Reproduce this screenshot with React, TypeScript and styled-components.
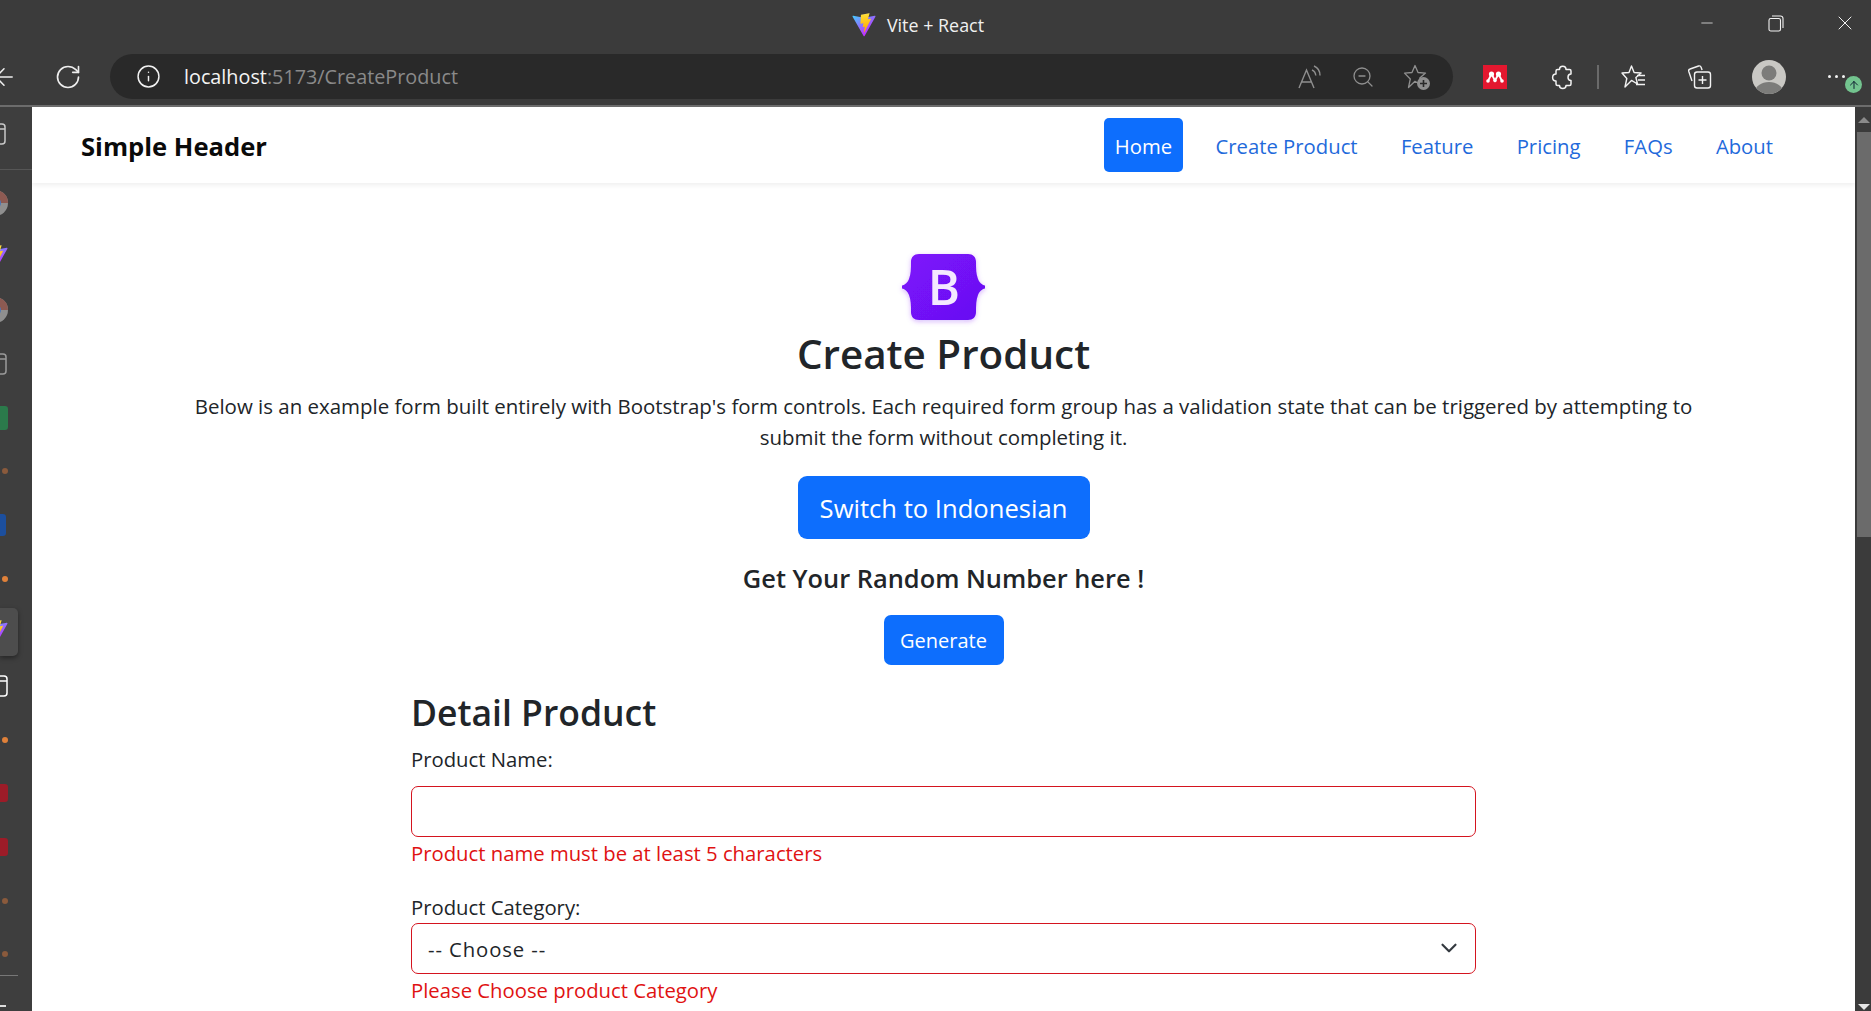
import styled, { createGlobalStyle } from 'styled-components';
import {
	ChevronDown,
	Info,
	RotateCw,
	ZoomOut,
	Minus,
	X,
	ArrowUp,
	ArrowLeft,
} from 'lucide-react';

const GlobalStyle = createGlobalStyle`
	html, body {
		margin: 0;
		padding: 0;
		background: #fff;
	}
	body {
		font-family: "Open Sans", "Noto Sans", sans-serif;
		color: #212529;
		overflow: hidden;
	}
	* {
		box-sizing: border-box;
	}
`;

const Screen = styled.div`
	width: 1871px;
	height: 1011px;
	display: flex;
	flex-direction: column;
	overflow: hidden;
	background: #3b3b3b;
`;

const TitleBar = styled.div`
	height: 46px;
	flex: none;
	display: flex;
	align-items: center;
	justify-content: center;
	gap: 11px;
	position: relative;
	color: #f0f0f0;
	font-size: 17.9px;
	padding: 4px 35px 0 0;
`;

const WindowControls = styled.div`
	position: absolute;
	right: -8px;
	top: 0;
	height: 46px;
	display: flex;
	align-items: center;
`;

const WindowButton = styled.div`
	width: 69px;
	display: flex;
	justify-content: center;
	color: #f2f2f2;
`;

const Toolbar = styled.div`
	height: 61px;
	flex: none;
	display: flex;
	align-items: flex-start;
	padding-top: 8px;
	border-bottom: 2px solid #6c6c6c;
	color: #f2f2f2;
`;

const BackSlot = styled.div`
	width: 110px;
	height: 45px;
	flex: none;
	display: flex;
	align-items: center;
	color: #eee;
`;

const BackIcon = styled.div`
	margin-left: -10px;
	display: flex;
`;

const ReloadIcon = styled.div`
	margin-left: 36px;
	display: flex;
`;

const AddressPill = styled.div`
	width: 1343px;
	height: 45px;
	flex: none;
	display: flex;
	align-items: center;
	background: #292929;
	border-radius: 23px;
	padding-left: 26px;
`;

const Url = styled.div`
	margin-left: 23px;
	font-size: 19.8px;
	color: #8a8a8a;
	flex: 1;
	span {
		color: #f4f4f4;
	}
`;

const PillIcons = styled.div`
	display: flex;
	align-items: center;
	gap: 28px;
	padding-right: 22px;
	color: #8f8f8f;
`;

const ToolIcons = styled.div`
	flex: 1;
	height: 45px;
	display: flex;
	align-items: center;
	position: relative;
`;

const ToolSlot = styled.div<{ $w: number }>`
	width: ${(p) => p.$w}px;
	flex: none;
	display: flex;
	justify-content: center;
	align-items: center;
`;

const Divider = styled.div`
	width: 2px;
	height: 24px;
	background: #6a6a6a;
`;

const Avatar = styled.div`
	width: 34px;
	height: 34px;
	border-radius: 50%;
	background: #c9c8c4;
	overflow: hidden;
	flex: none;
`;

const MenuDots = styled.div`
	display: flex;
	gap: 4px;
`;

const MenuDot = styled.i`
	width: 3px;
	height: 3px;
	border-radius: 50%;
	background: #f2f2f2;
`;

const UpdateBadge = styled.div`
	position: absolute;
	right: 13px;
	top: 22px;
	width: 17px;
	height: 17px;
	border-radius: 50%;
	background: #73c48f;
	color: #123;
	display: flex;
	align-items: center;
	justify-content: center;
`;

const Body = styled.div`
	flex: 1;
	min-height: 0;
	display: flex;
`;

const Sidebar = styled.div`
	width: 32px;
	flex: none;
	overflow: hidden;
	display: flex;
	flex-direction: column;
	background: #3e3e3e;
`;

const TopTab = styled.div`
	height: 63px;
	flex: none;
	display: flex;
	align-items: center;
	border-bottom: 1px solid #565656;
	padding-bottom: 8px;
	margin-bottom: 6px;
	color: #ddd;
`;

const Slot = styled.div`
	height: 53.7px;
	flex: none;
	display: flex;
	align-items: center;
`;

const ActiveTile = styled.div`
	width: 18px;
	height: 48px;
	background: #4d4d4d;
	border-radius: 0 5px 5px 0;
	box-shadow: 0 2px 5px rgba(0, 0, 0, 0.4);
	display: flex;
	align-items: center;
	overflow: hidden;
`;

const CroppedIcon = styled.div<{ $shift: number }>`
	margin-left: ${(p) => p.$shift}px;
	display: flex;
	flex: none;
`;

const Dot = styled.i<{ $dim?: boolean }>`
	width: 6px;
	height: 6px;
	margin-left: 2px;
	border-radius: 50%;
	background: ${(p) => (p.$dim ? '#8a5a3c' : '#e0813a')};
`;

const Tile = styled.i<{ $color: string; $w: number; $h: number }>`
	width: ${(p) => p.$w}px;
	height: ${(p) => p.$h}px;
	background: ${(p) => p.$color};
	border-radius: 0 3px 3px 0;
`;

const SideRule = styled.div`
	width: 18px;
	height: 1px;
	background: #777;
	margin-top: -6px;
`;

const SideDash = styled.div`
	width: 6px;
	height: 2px;
	background: #ddd;
	margin-top: 29px;
`;

const Page = styled.div`
	flex: 1;
	min-width: 0;
	background: #fff;
	overflow: hidden;
`;

const Navbar = styled.nav`
	height: 76px;
	display: flex;
	align-items: center;
	justify-content: space-between;
	padding: 0 71px 0 49px;
	box-shadow: 0 2px 5px rgba(0, 0, 0, 0.07);
`;

const Brand = styled.div`
	font-size: 25.6px;
	font-weight: 700;
	color: #0a0a0a;
	padding-top: 2px;
`;

const NavLinks = styled.div`
	display: flex;
	gap: 21.3px;
`;

const NavLink = styled.a<{ $active?: boolean }>`
	height: 54px;
	padding: 2px 11px 0;
	display: flex;
	align-items: center;
	font-size: 20.3px;
	border-radius: 5px;
	color: ${(p) => (p.$active ? '#fff' : '#1f6adb')};
	background: ${(p) => (p.$active ? '#0d6efd' : 'transparent')};
`;

const Hero = styled.div`
	display: flex;
	flex-direction: column;
	align-items: center;
	text-align: center;
	padding-top: 71px;
`;

const LogoMark = styled.svg`
	width: 83px;
	height: 66px;
	display: block;
	overflow: visible;
`;

const Title = styled.h1`
	margin: 11px 0 0;
	font-size: 40.4px;
	line-height: 46px;
	font-weight: 600;
`;

const Lead = styled.p`
	margin: 14px 0 0;
	width: 1540px;
	font-size: 20.47px;
	line-height: 31px;
`;

const PrimaryButton = styled.button<{ $large?: boolean }>`
	border: 0;
	font-family: inherit;
	color: #fff;
	background: #0d6efd;
	padding: 1px 0 0;
	width: ${(p) => (p.$large ? 292 : 120)}px;
	height: ${(p) => (p.$large ? 63 : 50)}px;
	border-radius: ${(p) => (p.$large ? 9 : 7)}px;
	font-size: ${(p) => (p.$large ? 25.6 : 20)}px;
`;

const LangButton = styled(PrimaryButton)`
	margin-top: 23px;
`;

const RandomLabel = styled.h3`
	margin: 22px 0 20px;
	font-size: 25.4px;
	line-height: 34px;
	font-weight: 600;
`;

const FormBlock = styled.form`
	width: 1065px;
	margin: 22px auto 0;
`;

const FormTitle = styled.h2`
	margin: 0;
	font-size: 35.5px;
	line-height: 50px;
	font-weight: 600;
`;

const Label = styled.label`
	display: block;
	font-size: 20.3px;
	line-height: 28px;
`;

const NameLabel = styled(Label)`
	margin: 8px 0 13px;
`;

const CategoryLabel = styled(Label)`
	margin: 26px 0 2px;
`;

const FieldInput = styled.input`
	display: block;
	width: 100%;
	height: 51px;
	border: 1.2px solid #d4141f;
	border-radius: 7px;
	background: #fff;
	outline: none;
`;

const SelectWrap = styled.div`
	position: relative;
	margin-bottom: 1px;
`;

const FieldSelect = styled.select`
	display: block;
	width: 100%;
	height: 51px;
	padding: 0 16px;
	appearance: none;
	border: 1.2px solid #d4141f;
	border-radius: 7px;
	background: #fff;
	font-family: inherit;
	font-size: 20.3px;
	letter-spacing: 0.9px;
	color: #212529;
	outline: none;
`;

const SelectChevron = styled.div`
	position: absolute;
	right: 14px;
	top: 12px;
	display: flex;
	color: #343a40;
`;

const FieldError = styled.div`
	color: #e01212;
	font-size: 20.3px;
	line-height: 28px;
	margin-top: 2px;
`;

const ScrollTrack = styled.div`
	width: 16px;
	flex: none;
	background: #3b3b3b;
	display: flex;
	flex-direction: column;
	align-items: flex-end;
`;

const ScrollArrow = styled.div<{ $down?: boolean }>`
	width: 0;
	height: 0;
	margin: ${(p) => (p.$down ? 'auto 1px 1px 0' : '10px 1px 0 0')};
	border-left: 6px solid transparent;
	border-right: 6px solid transparent;
	${(p) =>
		p.$down
			? 'border-top: 6px solid #e6e6e6;'
			: 'border-bottom: 6px solid #8a8a8a;'}
`;

const ScrollThumb = styled.div`
	width: 14px;
	height: 405px;
	margin-top: 9px;
	background: #6b6b6b;
`;

const ViteLogo = ({ size = 24 }: { size?: number }) => (
	<svg width={size} height={size} viewBox="0 0 410 404">
		<defs>
			<linearGradient id="viteA" x1="6" y1="33" x2="235" y2="344" gradientUnits="userSpaceOnUse">
				<stop stopColor="#41D1FF" />
				<stop offset="1" stopColor="#BD34FE" />
			</linearGradient>
			<linearGradient id="viteB" x1="194" y1="8" x2="236" y2="292" gradientUnits="userSpaceOnUse">
				<stop stopColor="#FFEA83" />
				<stop offset="0.08" stopColor="#FFDD35" />
				<stop offset="1" stopColor="#FFA800" />
			</linearGradient>
		</defs>
		<path
			d="M399.641 59.525L215.643 388.545C211.844 395.338 202.084 395.378 198.228 388.618L10.582 59.556C6.38 52.19 12.68 43.266 21.028 44.76L205.223 77.682C206.398 77.892 207.601 77.89 208.776 77.676L389.119 44.806C397.439 43.289 403.768 52.143 399.641 59.525Z"
			fill="url(#viteA)"
		/>
		<path
			d="M292.965 1.574L156.801 28.255C154.563 28.694 152.906 30.59 152.771 32.866L144.395 174.33C144.198 177.662 147.258 180.248 150.51 179.498L188.42 170.749C191.967 169.931 195.172 173.055 194.443 176.622L183.18 231.775C182.422 235.487 185.907 238.661 189.532 237.56L212.947 230.446C216.577 229.344 220.065 232.527 219.297 236.242L201.398 322.875C200.278 328.294 207.486 331.249 210.492 326.603L212.5 323.5L323.454 102.072C325.312 98.365 322.108 94.137 318.036 94.923L279.014 102.454C275.347 103.161 272.227 99.746 273.262 96.158L298.731 7.867C299.767 4.273 296.636 0.855 292.965 1.574Z"
			fill="url(#viteB)"
		/>
	</svg>
);

const RestoreIcon = () => (
	<svg width="16" height="17" viewBox="0 0 16 17" fill="none" stroke="currentColor" strokeWidth="1.1">
		<rect x="1" y="3.5" width="11.5" height="12.5" rx="1.8" />
		<path d="M4 1h8.5A2.5 2.5 0 0 1 15 3.5V13" />
	</svg>
);

const ReadAloudIcon = () => (
	<svg width="26" height="26" viewBox="0 0 26 26" fill="none" stroke="currentColor" strokeWidth="1.4">
		<path d="M2 24L9.5 6 17 24M4.800 18h9.500" />
		<path d="M15 6c2 .8 3.500 2.800 3.800 5.500M17 2c3.500 1.500 6 5 6 9.500" />
	</svg>
);

const StarAddIcon = () => (
	<svg width="28" height="28" viewBox="0 0 28 28" fill="none">
		<path
			d="M12 2.500l3 7 7.500.6-5.700 4.900 1.800 7.300L12 18.300 5.500 24.500l1.800-8.500L1.500 10.100 9 9.500z"
			stroke="currentColor"
			strokeWidth="1.3"
			strokeLinejoin="round"
		/>
		<circle cx="20.500" cy="20.500" r="6.500" fill="#8f8f8f" />
		<path d="M20.500 17v7M17 20.500h7" stroke="#292929" strokeWidth="1.600" />
	</svg>
);

const PuzzleIcon = () => (
	<svg width="26" height="26" viewBox="0 0 26 26" fill="none" stroke="currentColor" strokeWidth="1.5" strokeLinejoin="round">
		<path d="M8.500 5.500H10.500C10.500 1 17 1 17 5.500H20.500C21.500 5.500 22 6 22 7V10C18 10 18 16.500 22 16.500V20C22 21 21.500 21.500 20.500 21.500H17C17 25.500 10.500 25.500 10.500 21.500H8.500C7.500 21.500 7 21 7 20V17C2.500 17 2.500 10 7 10V7C7 6 7.500 5.500 8.500 5.500Z" />
	</svg>
);

const FavoritesIcon = () => (
	<svg width="26" height="26" viewBox="0 0 26 26" fill="none" stroke="currentColor" strokeWidth="1.4">
		<path d="M10.500 2l2.600 6.500 7 .5-5.200 4.500 1.600 6.500-6-3.600L4 23l1.800-8.500L1 9l7-.5z" strokeLinejoin="round" />
		<path d="M16 11.500h8M17 16h7M15 20.500h9" />
	</svg>
);

const CollectionsIcon = () => (
	<svg width="26" height="26" viewBox="0 0 26 26" fill="none" stroke="currentColor" strokeWidth="1.4">
		<path d="M5 17L1.800 7.500a2 2 0 0 1 1.300-2.500l8.500-3a2 2 0 0 1 2.500 1.200l1 2.800" />
		<rect x="7.500" y="8" width="16" height="16" rx="2.500" />
		<path d="M15.500 12v8M11.500 16h8" />
	</svg>
);

const MendeleyIcon = () => (
	<svg width="24" height="24" viewBox="0 0 24 24">
		<rect width="24" height="24" fill="#e3172f" />
		<g fill="#fff">
			<circle cx="8.500" cy="9" r="2.600" />
			<circle cx="15.500" cy="9" r="2.600" />
			<circle cx="5" cy="16" r="1.800" />
			<circle cx="12" cy="15.500" r="1.800" />
			<circle cx="19" cy="16" r="1.800" />
		</g>
		<path d="M5 16l3.500-7 3.500 6.500L15.500 9 19 16" stroke="#fff" strokeWidth="1.800" fill="none" />
	</svg>
);

const AvatarArt = () => (
	<svg width="34" height="34" viewBox="0 0 34 34">
		<circle cx="17" cy="13" r="7.500" fill="#7c7c7a" />
		<ellipse cx="17" cy="32" rx="14" ry="10" fill="#7c7c7a" />
	</svg>
);

const ChromeBall = () => (
	<svg width="26" height="26" viewBox="0 0 26 26">
		<circle cx="13" cy="13" r="13" fill="#8f8f8f" />
		<path d="M13 13h13a13 13 0 0 0-8-12z" fill="#8d5a52" />
		<circle cx="13" cy="13" r="6" fill="#4d78b8" />
	</svg>
);

const OutlineBox = ({ dot, stroke = '#c8c8c8' }: { dot?: boolean; stroke?: string }) => (
	<svg width="20" height="22" viewBox="0 0 20 22" fill="none" stroke={stroke} strokeWidth="1.500">
		<rect x="1" y="1" width="18" height="20" rx="3" />
		<path d="M1 6h18" />
		{dot && <circle cx="10" cy="12" r="1" fill={stroke} />}
	</svg>
);

const BootstrapLogo = () => (
	<LogoMark viewBox="0 0 83 66">
		<defs>
			<linearGradient id="bsFill" x1="0" y1="0" x2="1" y2="1">
				<stop stopColor="#7f13fb" />
				<stop offset="1" stopColor="#6610f2" />
			</linearGradient>
			<filter id="bsGlow" x="-20%" y="-20%" width="140%" height="140%">
				<feDropShadow dx="0" dy="1.500" stdDeviation="2.500" floodColor="#7a1cf5" floodOpacity="0.3" />
			</filter>
		</defs>
		<path
			filter="url(#bsGlow)"
			fill="url(#bsFill)"
			d="M17 0H66C71 0 74 3 74 8C74 14 74 20 76 25C77 28 80 31 83 31.500V34.500C80 35 77 38 76 41C74 46 74 52 74 58C74 63 71 66 66 66H17C12 66 9 63 9 58C9 52 9 46 7 41C6 38 3 35 0 34.500V31.500C3 31 6 28 7 25C9 20 9 14 9 8C9 3 12 0 17 0Z"
		/>
		<text
			x="42"
			y="50.500"
			textAnchor="middle"
			fontFamily="'Open Sans', sans-serif"
			fontWeight="600"
			fontSize="49"
			fill="#f3e9ff"
		>
			B
		</text>
	</LogoMark>
);

export default function App() {
	return (
		<>
			<GlobalStyle />
			<Screen>
				<TitleBar>
					<ViteLogo size={24} />
					Vite + React
					<WindowControls>
						<WindowButton>
							<Minus size={18} strokeWidth={1} />
						</WindowButton>
						<WindowButton>
							<RestoreIcon />
						</WindowButton>
						<WindowButton>
							<X size={24} strokeWidth={1} />
						</WindowButton>
					</WindowControls>
				</TitleBar>

				<Toolbar>
					<BackSlot>
						<BackIcon>
							<ArrowLeft size={28} strokeWidth={1.3} />
						</BackIcon>
						<ReloadIcon>
							<RotateCw size={28} strokeWidth={1.4} />
						</ReloadIcon>
					</BackSlot>
					<AddressPill>
						<Info size={25} strokeWidth={1.4} />
						<Url>
							<span>localhost</span>:5173/CreateProduct
						</Url>
						<PillIcons>
							<ReadAloudIcon />
							<ZoomOut size={24} strokeWidth={1.3} />
							<StarAddIcon />
						</PillIcons>
					</AddressPill>
					<ToolIcons>
						<ToolSlot $w={84}>
							<MendeleyIcon />
						</ToolSlot>
						<ToolSlot $w={50}>
							<PuzzleIcon />
						</ToolSlot>
						<ToolSlot $w={22}>
							<Divider />
						</ToolSlot>
						<ToolSlot $w={50}>
							<FavoritesIcon />
						</ToolSlot>
						<ToolSlot $w={82}>
							<CollectionsIcon />
						</ToolSlot>
						<ToolSlot $w={56}>
							<Avatar>
								<AvatarArt />
							</Avatar>
						</ToolSlot>
						<ToolSlot $w={78}>
							<MenuDots>
								<MenuDot />
								<MenuDot />
								<MenuDot />
							</MenuDots>
						</ToolSlot>
						<UpdateBadge>
							<ArrowUp size={12} strokeWidth={2} />
						</UpdateBadge>
					</ToolIcons>
				</Toolbar>

				<Body>
					<Sidebar>
						<TopTab>
							<CroppedIcon $shift={-14}>
								<OutlineBox />
							</CroppedIcon>
						</TopTab>
						<Slot>
							<CroppedIcon $shift={-18}>
								<ChromeBall />
							</CroppedIcon>
						</Slot>
						<Slot>
							<CroppedIcon $shift={-16}>
								<ViteLogo size={24} />
							</CroppedIcon>
						</Slot>
						<Slot>
							<CroppedIcon $shift={-18}>
								<ChromeBall />
							</CroppedIcon>
						</Slot>
						<Slot>
							<CroppedIcon $shift={-13}>
								<OutlineBox dot stroke="#9a9a9a" />
							</CroppedIcon>
						</Slot>
						<Slot>
							<Tile $color="#2b7a4b" $w={8} $h={24} />
						</Slot>
						<Slot>
							<Dot $dim />
						</Slot>
						<Slot>
							<Tile $color="#1c4f9e" $w={6} $h={22} />
						</Slot>
						<Slot>
							<Dot />
						</Slot>
						<Slot>
							<ActiveTile>
								<CroppedIcon $shift={-16}>
									<ViteLogo size={24} />
								</CroppedIcon>
							</ActiveTile>
						</Slot>
						<Slot>
							<CroppedIcon $shift={-12}>
								<OutlineBox dot stroke="#fff" />
							</CroppedIcon>
						</Slot>
						<Slot>
							<Dot />
						</Slot>
						<Slot>
							<Tile $color="#9c1c28" $w={8} $h={18} />
						</Slot>
						<Slot>
							<Tile $color="#9c1c28" $w={8} $h={18} />
						</Slot>
						<Slot>
							<Dot $dim />
						</Slot>
						<Slot>
							<Dot $dim />
						</Slot>
						<SideRule />
						<SideDash />
					</Sidebar>

					<Page>
						<Navbar>
							<Brand>Simple Header</Brand>
							<NavLinks>
								<NavLink $active>Home</NavLink>
								<NavLink>Create Product</NavLink>
								<NavLink>Feature</NavLink>
								<NavLink>Pricing</NavLink>
								<NavLink>FAQs</NavLink>
								<NavLink>About</NavLink>
							</NavLinks>
						</Navbar>

						<Hero>
							<BootstrapLogo />
							<Title>Create Product</Title>
							<Lead>
								Below is an example form built entirely with Bootstrap's form controls. Each required form group has a validation state that can be triggered by attempting to submit the form without completing it.
							</Lead>
							<LangButton $large type="button">
								Switch to Indonesian
							</LangButton>
							<RandomLabel>Get Your Random Number here !</RandomLabel>
							<PrimaryButton type="button">Generate</PrimaryButton>
						</Hero>

						<FormBlock>
							<FormTitle>Detail Product</FormTitle>
							<NameLabel>Product Name:</NameLabel>
							<FieldInput />
							<FieldError>Product name must be at least 5 characters</FieldError>
							<CategoryLabel>Product Category:</CategoryLabel>
							<SelectWrap>
								<FieldSelect>
									<option>-- Choose --</option>
								</FieldSelect>
								<SelectChevron>
									<ChevronDown size={26} strokeWidth={2} />
								</SelectChevron>
							</SelectWrap>
							<FieldError>Please Choose product Category</FieldError>
						</FormBlock>
					</Page>

					<ScrollTrack>
						<ScrollArrow />
						<ScrollThumb />
						<ScrollArrow $down />
					</ScrollTrack>
				</Body>
			</Screen>
		</>
	);
}
